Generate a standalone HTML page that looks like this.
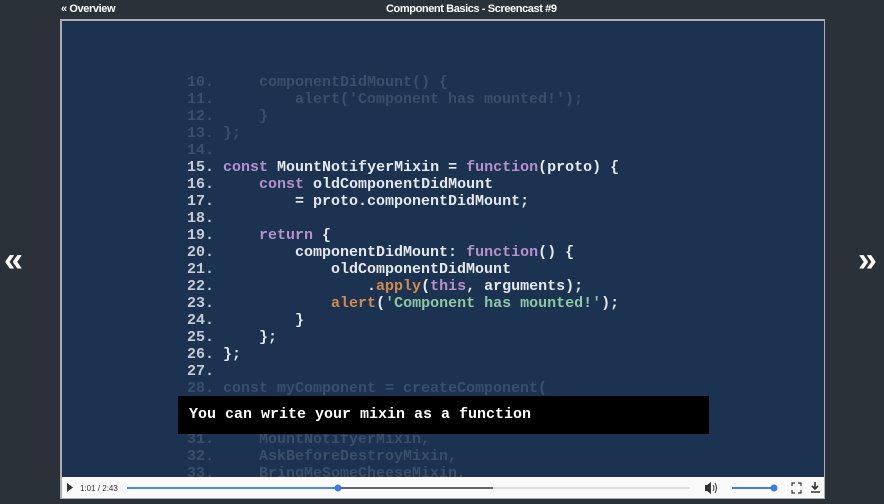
<!DOCTYPE html>
<html><head><meta charset="utf-8"><style>
*{margin:0;padding:0;box-sizing:border-box}
body{width:884px;height:504px;background:#2b3138;position:relative;overflow:hidden;font-family:"Liberation Sans",sans-serif}
.hdr{position:absolute;top:3px;color:#fff;font-size:11px;font-weight:bold;letter-spacing:-0.4px}
.frame{position:absolute;left:60px;top:19px;width:765px;height:480px;background:#a9adb2;padding:2px 1px 1px 2px}
.frame .in{position:absolute;left:2px;top:2px;right:1px;bottom:1px;background:#1b3350;overflow:hidden}
.code{position:absolute;left:125px;top:53px;font-family:"Liberation Mono",monospace;font-size:15px;line-height:17px;white-space:pre;font-weight:bold;color:#e6e8ee}
.d{color:#3a4f69}
.n{color:#c7cbd3}
.k{color:#b98fcf}
.s{color:#8cc9a2}
.o{color:#d48a4e}
.cap{position:absolute;left:116px;top:375px;width:531px;height:38px;background:#000;color:#fff;font-family:"Liberation Mono",monospace;font-size:15px;font-weight:bold;padding:10px 0 0 11px}
.bar{position:absolute;left:0;right:0;top:456px;height:21px;background:#fafafa}
.arrow{position:absolute;top:243px;color:#fff;font-size:34px;font-weight:bold;line-height:34px}
</style></head><body>
<div class="hdr" style="left:61px">« Overview</div>
<div class="hdr" style="left:386px">Component Basics - Screencast #9</div>
<div class="arrow" style="left:4px">«</div>
<div class="arrow" style="left:858px">»</div>
<div class="frame"><div class="in">
<div class="code"><span class="d">10.     componentDidMount() {
11.         alert('Component has mounted!');
12.     }
13. };
14.</span>
<span class="n">15.</span> <span class="k">const</span> MountNotifyerMixin = <span class="k">function</span>(proto) {
<span class="n">16.</span>     <span class="k">const</span> oldComponentDidMount
<span class="n">17.</span>         = proto.componentDidMount;
<span class="n">18.</span>
<span class="n">19.</span>     <span class="k">return</span> {
<span class="n">20.</span>         componentDidMount: <span class="k">function</span>() {
<span class="n">21.</span>             oldComponentDidMount
<span class="n">22.</span>                 .<span class="o">apply</span>(<span class="k">this</span>, arguments);
<span class="n">23.</span>             <span class="o">alert</span>(<span class="s">'Component has mounted!'</span>);
<span class="n">24.</span>         }
<span class="n">25.</span>     };
<span class="n">26.</span> };
<span class="n">27.</span>
<span class="d">28. const myComponent = createComponent(
29.     {},
30.     [
31.     MountNotifyerMixin,
32.     AskBeforeDestroyMixin,
33.     BringMeSomeCheeseMixin,</span></div>
<div class="cap">You can write your mixin as a function</div>
<div class="bar">
<svg width="762" height="21" style="position:absolute;left:0;top:0">
<polygon points="5,6 5,15 11,10.5" fill="#333"/>
<text x="18" y="14" font-family="Liberation Sans" font-size="8" fill="#333">1:01 / 2:43</text>
<rect x="65" y="10" width="563" height="2" fill="#ddd"/>
<rect x="65" y="10" width="366" height="2" fill="#666"/>
<rect x="65" y="10" width="211" height="2" fill="#4a86e8"/>
<circle cx="276" cy="11" r="3.5" fill="#3b7de6"/>
<polygon points="643,8 645,8 649,5 649,17 645,14 643,14" fill="#333"/>
<path d="M651,8 q2,3 0,6 M653,6 q3,5 0,10" stroke="#333" fill="none" stroke-width="1"/>
<rect x="670" y="10" width="42" height="2" fill="#3b7de6"/>
<circle cx="712" cy="11" r="3.5" fill="#3b7de6"/>
<path d="M730,9 v-3 h3 M736,6 h3 v3 M739,13 v3 h-3 M733,16 h-3 v-3" stroke="#333" fill="none" stroke-width="1.2"/>
<path d="M753,5 v6 M750,9 l3,3 l3,-3 M749,15 h9" stroke="#333" fill="none" stroke-width="1.6"/>
</svg>
</div>
</div></div>
</body></html>
